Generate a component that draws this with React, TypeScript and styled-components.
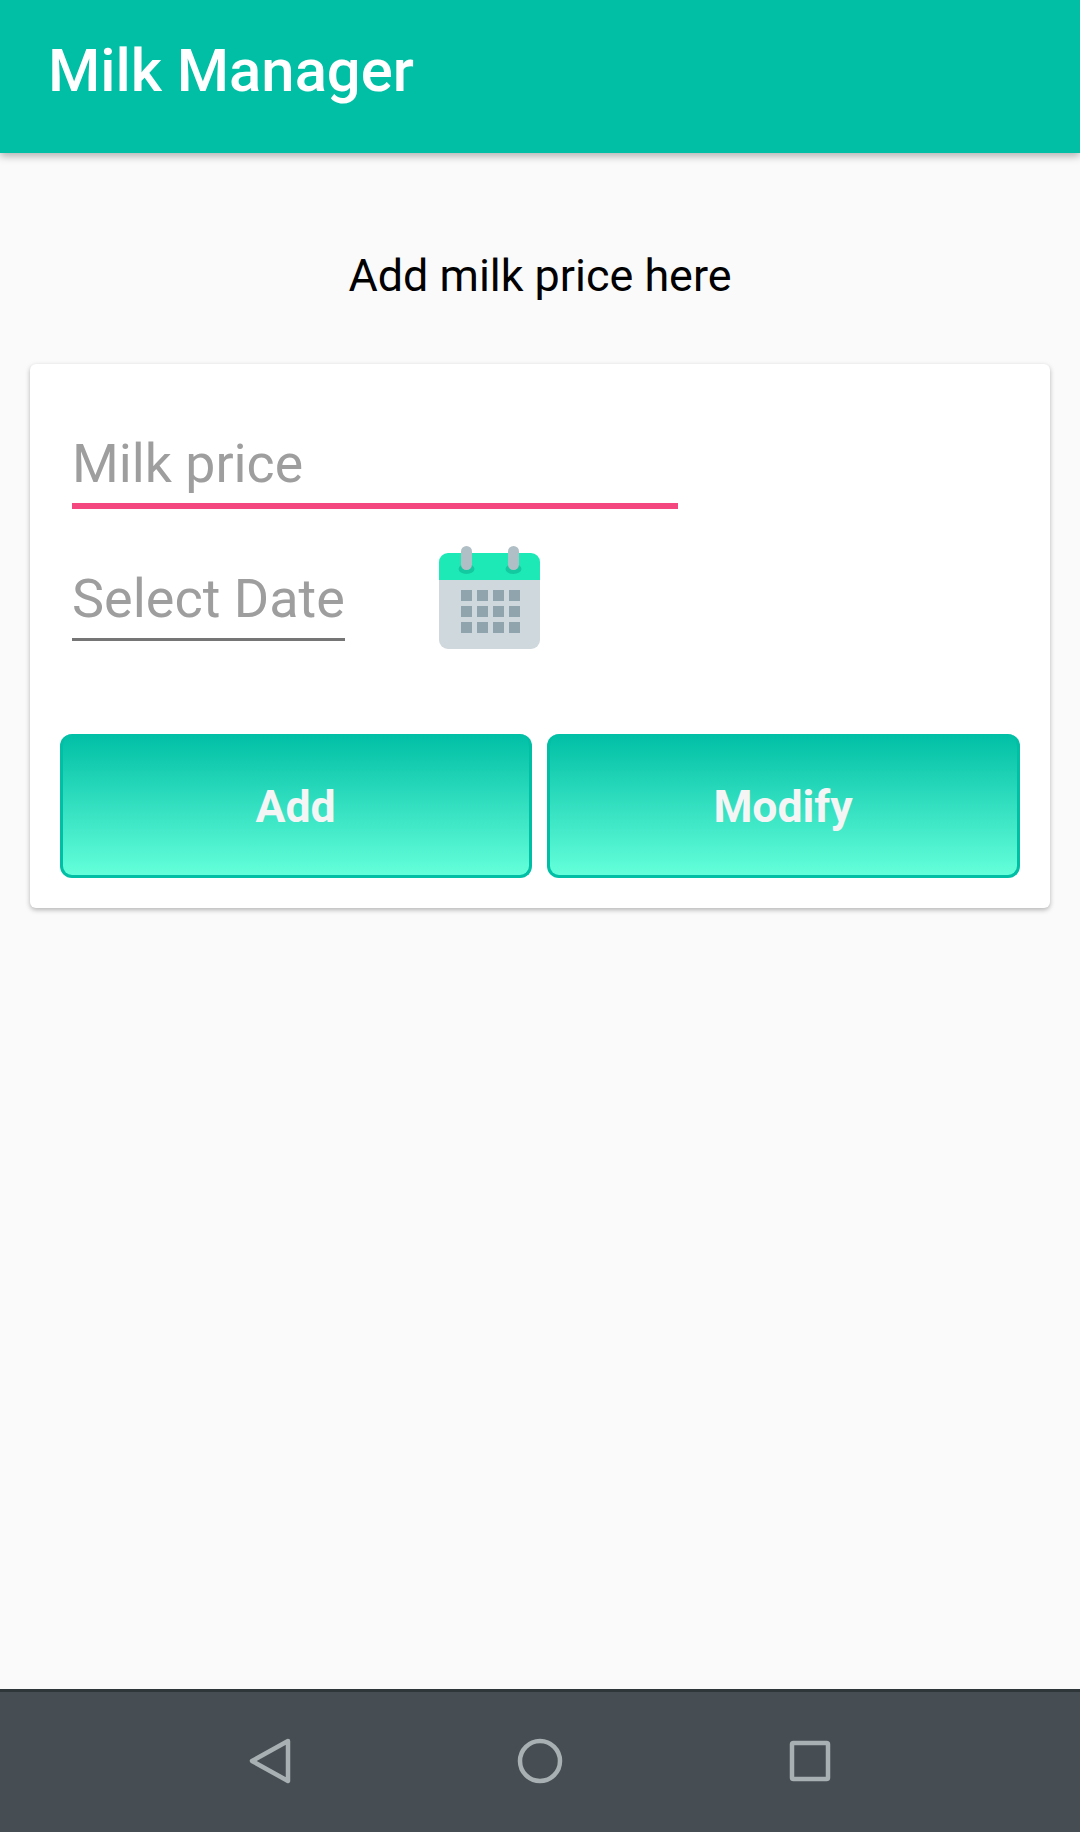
import styled, { createGlobalStyle } from "styled-components";

const GlobalStyle = createGlobalStyle`
  html, body {
    margin: 0;
    padding: 0;
    background: #fafafa;
  }
  body {
    font-family: Roboto, "Liberation Sans", sans-serif;
  }
`;

const CalendarIcon = () => (
  <svg width="101" height="103" viewBox="0 0 101 103">
    <path d="M0 16a9 9 0 0 1 9-9h83a9 9 0 0 1 9 9v18H0z" fill="#1de9b6" />
    <path d="M0 34h101v60a9 9 0 0 1-9 9H9a9 9 0 0 1-9-9z" fill="#cfd8dc" />
    <ellipse cx="27.5" cy="23" rx="8" ry="5" fill="#13c9a0" />
    <ellipse cx="74.5" cy="23" rx="8" ry="5" fill="#13c9a0" />
    <rect x="22" y="0" width="11" height="24" rx="5.5" fill="#b0bec5" />
    <rect x="69" y="0" width="11" height="24" rx="5.5" fill="#b0bec5" />
    {[44, 60, 76].map((y) =>
      [22, 38, 54, 70].map((x) => (
        <rect key={`${x}-${y}`} x={x} y={y} width="11" height="11" fill="#90a4ae" />
      ))
    )}
  </svg>
);

export default function App() {
  return (
    <Screen>
      <GlobalStyle />
      <AppBar>
        <Title>Milk Manager</Title>
      </AppBar>
      <Content>
        <Heading>Add milk price here</Heading>
        <Card>
          <PriceField>Milk price</PriceField>
          <DateRow>
            <DateField>Select Date</DateField>
            <CalendarIcon />
          </DateRow>
          <Buttons>
            <ActionButton>Add</ActionButton>
            <ActionButton>Modify</ActionButton>
          </Buttons>
        </Card>
      </Content>
      <NavBar>
        <svg width="44" height="50" viewBox="0 0 44 50">
          <path d="M40 5 4 25l36 20z" fill="none" stroke="#a8b0b3" strokeWidth="4.5" strokeLinejoin="round" />
        </svg>
        <svg width="46" height="46" viewBox="0 0 46 46">
          <circle cx="23" cy="23" r="20" fill="none" stroke="#a8b0b3" strokeWidth="4.5" />
        </svg>
        <svg width="44" height="44" viewBox="0 0 44 44">
          <rect x="4" y="4" width="36" height="36" rx="1.5" fill="none" stroke="#a8b0b3" strokeWidth="4.5" />
        </svg>
      </NavBar>
    </Screen>
  );
}

const Screen = styled.div`
  width: 1080px;
  height: 1832px;
  display: flex;
  flex-direction: column;
  background: #fafafa;
  overflow: hidden;
`;

const AppBar = styled.header`
  height: 153px;
  flex-shrink: 0;
  display: flex;
  align-items: center;
  padding-left: 48px;
  background: #00bfa5;
  box-shadow: 0 3px 8px rgba(0, 0, 0, 0.3);
  position: relative;
`;

const Title = styled.h1`
  margin: 0 0 12px;
  font-size: 59.8px;
  line-height: 70px;
  font-weight: 500;
  color: #fff;
`;

const Content = styled.main`
  flex: 1;
  display: flex;
  flex-direction: column;
  padding: 96px 30px 0;
`;

const Heading = styled.p`
  margin: 0;
  height: 115px;
  text-align: center;
  font-size: 44.9px;
  line-height: 54px;
  color: #000;
`;

const Card = styled.section`
  height: 544px;
  box-sizing: border-box;
  padding: 68px 30px 30px;
  display: flex;
  flex-direction: column;
  background: #fff;
  border-radius: 6px;
  box-shadow: 0 2px 5px rgba(0, 0, 0, 0.28);
`;

const PriceField = styled.div`
  width: 606px;
  height: 77px;
  margin-left: 12px;
  box-sizing: border-box;
  font-size: 53.6px;
  line-height: 64px;
  color: #9e9e9e;
  border-bottom: 6px solid #f44780;
`;

const DateRow = styled.div`
  display: flex;
  align-items: flex-end;
  margin: 37px 0 0 12px;
  gap: 94px;
`;

const DateField = styled.div`
  height: 74px;
  box-sizing: border-box;
  margin-bottom: 8px;
  font-size: 54px;
  line-height: 64px;
  color: #9e9e9e;
  border-bottom: 3px solid #757575;
`;

const Buttons = styled.div`
  display: grid;
  grid-template-columns: 472px 473px;
  justify-content: space-between;
  margin-top: auto;
`;

const ActionButton = styled.button`
  height: 144px;
  padding: 4px 1px 0 0;
  font-family: inherit;
  font-size: 44.5px;
  font-weight: 700;
  color: #f5f5f5;
  border: 3px solid #00bfa5;
  border-top-width: 0;
  border-radius: 12px;
  background: linear-gradient(180deg, #00bfa5 0%, #64ffda 100%);
`;

const NavBar = styled.nav`
  height: 138px;
  flex-shrink: 0;
  display: grid;
  grid-template-columns: repeat(3, 270px);
  justify-items: center;
  align-items: center;
  padding: 0 135px 2px;
  background: #474e53;
  border-top: 3px solid #2f363a;
`;
